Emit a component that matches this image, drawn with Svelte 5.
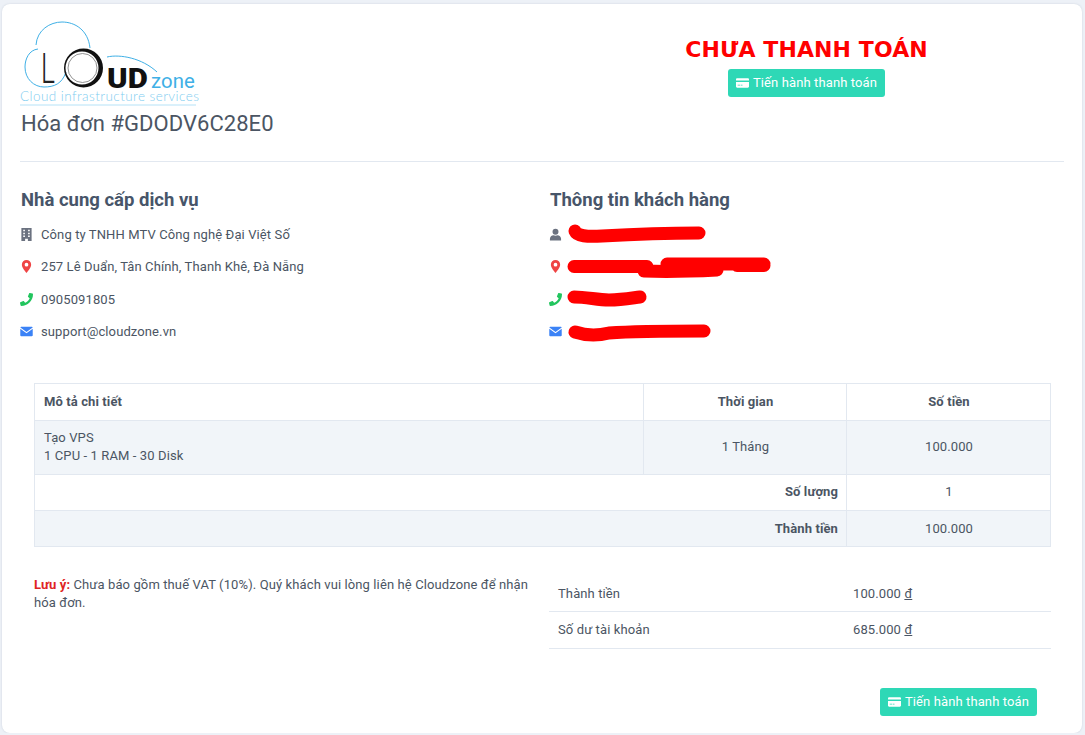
<script lang="ts">
  const provider = [
    { icon: 'building', text: 'Công ty TNHH MTV Công nghệ Đại Việt Số' },
    { icon: 'pin', text: '257 Lê Duẩn, Tân Chính, Thanh Khê, Đà Nẵng' },
    { icon: 'phone', text: '0905091805' },
    { icon: 'mail', text: 'support@cloudzone.vn' },
  ];

  // hidden customer details, scribbled over in the original
  const customer = [
    { icon: 'user', w: 142, h: 20, d: 'M8 7C10 12 20 13 35 12C70 10 105 9 132 9' },
    { icon: 'pin', w: 208, h: 24, d: 'M7 11.500H80M77 16C100 17 130 16 150 15M100 9H197M170 10.500H197' },
    { icon: 'phone', w: 84, h: 18, d: 'M7 7C20 7 30 10 42 10C55 10 65 8 73 7' },
    { icon: 'mail', w: 148, h: 20, d: 'M8 10C20 14 30 14 42 11C70 9 110 9 137 9' },
  ];
</script>

{#snippet icon(name)}
  {#if name === 'building'}
    <svg class="ic" viewBox="0 0 14 14"><path fill="#6b7280" fill-rule="evenodd" d="M1.500 0h11v14H8.500v-2.500h-3V14h-4zM3.500 2v1.600h1.800V2zM8.700 2v1.600h1.800V2zM3.500 5v1.600h1.800V5zM8.700 5v1.600h1.800V5zM3.500 8v1.600h1.800V8zM8.700 8v1.600h1.800V8z" /></svg>
  {:else if name === 'pin'}
    <svg class="ic" viewBox="0 0 14 14"><path fill="#ef4444" fill-rule="evenodd" d="M7 0a5 5 0 0 1 5 5c0 3-3.400 6.700-5 9C5.400 11.700 2 8 2 5a5 5 0 0 1 5-5zm0 3a2 2 0 1 0 0 4 2 2 0 0 0 0-4z" /></svg>
  {:else if name === 'phone'}
    <svg class="ic" viewBox="0 0 512 512"><path fill="#22c55e" d="M493.400 24.600l-104-24c-11.300-2.600-22.900 3.300-27.500 13.900l-48 112c-4.200 9.800-1.400 21.300 6.900 28l60.600 49.600c-36 76.700-98.900 140.500-177.200 177.200l-49.600-60.600c-6.800-8.300-18.200-11.100-28-6.900l-112 48C3.900 366.500-2 378.100.6 389.400l24 104C27.100 504.200 36.700 512 48 512c256.100 0 464-207.500 464-464 0-11.200-7.700-20.900-18.600-23.400z" /></svg>
  {:else if name === 'mail'}
    <svg class="ic" viewBox="0 0 14 14"><path fill="#3b82f6" d="M1.300 2h11.400c.5 0 .9.300 1 .7L7 7.500.4 2.700c.1-.4.400-.7.900-.7zM.3 4.100 7 9l6.700-4.900V11c0 .6-.5 1-1 1H1.300c-.6 0-1-.4-1-1z" /></svg>
  {:else}
    <svg class="ic" viewBox="0 0 14 14"><path fill="#6b7280" d="M7 .8a3.200 3.200 0 1 1 0 6.400A3.200 3.200 0 0 1 7 .8zM1 13.500v-1.800C1 9.600 2.800 7.900 4.800 7.900c.7.300 1.400.5 2.200.5s1.500-.2 2.200-.5c2 0 3.800 1.700 3.800 3.800v1.800z" /></svg>
  {/if}
{/snippet}

{#snippet payButton()}
  <button class="pay">
    <svg class="card-ic" viewBox="0 0 14 12"><path fill="#fff" fill-rule="evenodd" d="M1.200 1h11.600c.6 0 1.200.5 1.200 1.100V3.300H0V2.100C0 1.500.6 1 1.200 1zM0 5h14v4.900c0 .6-.6 1.100-1.200 1.100H1.200C.6 11 0 10.500 0 9.900zM1.800 7.800v1h2.500v-1zM5 7.800v1h2v-1z" /></svg>
    <span>Tiến hành thanh toán</span>
  </button>
{/snippet}

<main class="invoice">
  <header class="top">
    <div class="brand">
      <svg class="logo" viewBox="0 0 180 84" width="180" height="84">
        <g fill="none" stroke="#3fb0e6" stroke-width="1">
          <path d="M16 23C17 8 30 0 42 0C55 0 68 8 70 26" />
          <path d="M18 27C9 28 5 37 5 45C5 57 14 65 24 65C34 65 42 62 46 50" />
          <path d="M87 35C100 32 122 36 137 50" />
        </g>
        <path fill="#111" fill-rule="evenodd" d="M63.500 26.500a19.500 19.500 0 1 1 0 39a19.500 19.500 0 1 1 0-39zM62 29.500a16.500 16.500 0 1 0 0 33a16.500 16.500 0 1 0 0-33z" />
        <circle cx="62.500" cy="46" r="14.500" fill="none" stroke="#777" stroke-width="0.8" />
        <text x="21" y="61" class="logo-l" textLength="14" lengthAdjust="spacingAndGlyphs">L</text>
        <text x="87" y="66" class="logo-ud" textLength="41" lengthAdjust="spacingAndGlyphs">UD</text>
        <text x="131" y="66" class="logo-zone" textLength="44" lengthAdjust="spacingAndGlyphs">zone</text>
        <text x="0" y="79" class="logo-sub" textLength="179" lengthAdjust="spacing">Cloud infrastructure services</text>
        <path d="M0 83H176" stroke="#b5e2f7" stroke-width="1" />
      </svg>
      <h1>Hóa đơn #GDODV6C28E0</h1>
    </div>
    <div class="status">
      <strong>CHƯA THANH TOÁN</strong>
      {@render payButton()}
    </div>
  </header>

  <section class="parties">
    <div>
      <h2>Nhà cung cấp dịch vụ</h2>
      <ul>
        {#each provider as row}
          <li>{@render icon(row.icon)}<span>{row.text}</span></li>
        {/each}
      </ul>
    </div>
    <div>
      <h2>Thông tin khách hàng</h2>
      <ul>
        {#each customer as row}
          <li>
            {@render icon(row.icon)}
            <svg class="scribble" width={row.w} height={row.h} viewBox="0 0 {row.w} {row.h}">
              <path d={row.d} fill="none" stroke="#ff0000" stroke-width="13" stroke-linecap="round" stroke-linejoin="round" />
            </svg>
          </li>
        {/each}
      </ul>
    </div>
  </section>

  <table class="items">
    <colgroup><col class="c1" /><col class="c2" /><col class="c3" /></colgroup>
    <thead>
      <tr class="taller"><th class="left">Mô tả chi tiết</th><th>Thời gian</th><th>Số tiền</th></tr>
    </thead>
    <tbody>
      <tr class="shade tall">
        <td class="left">Tạo VPS<br />1 CPU - 1 RAM - 30 Disk</td>
        <td>1 Tháng</td>
        <td>100.000</td>
      </tr>
      <tr class="lift"><th colspan="2" class="right">Số lượng</th><td>1</td></tr>
      <tr class="shade"><th colspan="2" class="right">Thành tiền</th><td>100.000</td></tr>
    </tbody>
  </table>

  <section class="summary">
    <p class="note"><b>Lưu ý:</b> Chưa báo gồm thuế VAT (10%). Quý khách vui lòng liên hệ Cloudzone để nhận hóa đơn.</p>
    <div class="totals">
      <div class="line"><span>Thành tiền</span><span>100.000 <u>đ</u></span></div>
      <div class="line"><span>Số dư tài khoản</span><span>685.000 <u>đ</u></span></div>
    </div>
  </section>

  <div class="actions">{@render payButton()}</div>
</main>

<style>
  :global(body) {
    background: #edf1f7;
    font-family: Roboto, sans-serif;
  }

  .invoice {
    box-sizing: border-box;
    width: 1080px;
    height: 729px;
    margin: 4px 0 0 2px;
    padding: 18px 18px 0;
    background: #fff;
    border-radius: 8px;
    box-shadow: 0 0 2px rgba(100, 116, 139, 0.25);
    color: #4b5563;
    font-size: 13px;
    letter-spacing: 0.11px;
  }

  .top {
    display: grid;
    grid-template-columns: 529px 515px;
    height: 139px;
    border-bottom: 1px solid #e2e8f0;
  }

  .logo {
    display: block;
    overflow: visible;
  }

  .logo-l {
    font: 300 42px Roboto, sans-serif;
    fill: #222;
  }

  .logo-ud {
    font: 900 28px Roboto, sans-serif;
    fill: #111;
  }

  .logo-zone {
    font: 400 21px Roboto, sans-serif;
    fill: #3fb0e6;
  }

  .logo-sub {
    font: 300 13.500px Lato, sans-serif;
    fill: #7fcdf0;
  }

  h1 {
    margin: 3px 0 0 1px;
    font-size: 22px;
    font-weight: 400;
    line-height: 30px;
    letter-spacing: 0.05px;
    color: #4b5563;
  }

  .status {
    display: flex;
    flex-direction: column;
    align-items: center;
    padding-top: 13px;
  }

  .status strong {
    font: 700 22px/30px "DejaVu Sans", sans-serif;
    letter-spacing: 0.1px;
    color: #ff0000;
    margin-bottom: 4px;
  }

  .pay {
    display: inline-flex;
    align-items: center;
    gap: 4px;
    height: 28px;
    padding: 0 8px;
    border: 0;
    border-radius: 3px;
    background: #2ed8b6;
    color: #fff;
    font: 400 13px Roboto, sans-serif;
    letter-spacing: 0.11px;
  }

  .pay span {
    margin-bottom: 2px;
  }

  .card-ic {
    width: 13px;
    height: 12px;
  }

  .parties {
    display: grid;
    grid-template-columns: 529px 515px;
    padding-top: 27px;
    height: 194px;
  }

  h2 {
    margin: 0 0 0 1px;
    font-size: 18.500px;
    font-weight: 700;
    line-height: 22px;
    letter-spacing: 0;
    color: #475569;
  }

  ul {
    list-style: none;
    margin: 7px 0 0;
    padding: 0;
  }

  li {
    display: flex;
    align-items: center;
    gap: 8px;
    height: 32.500px;
  }

  .ic {
    width: 13px;
    height: 13px;
    flex: none;
  }

  .scribble {
    flex: none;
    margin-left: -3px;
    overflow: visible;
  }

  .items {
    width: 1016px;
    margin-left: 14px;
    border-collapse: collapse;
    table-layout: fixed;
  }

  .c1 {
    width: 609px;
  }

  .c2 {
    width: 203px;
  }

  .c3 {
    width: 204px;
  }

  th,
  td {
    height: 36px;
    padding: 0 8px 0 9px;
    border: 1px solid #e2e8f0;
    text-align: center;
    font-weight: 400;
    line-height: 18px;
    box-sizing: border-box;
  }

  th {
    font-weight: 700;
    font-size: 13px;
  }

  .left {
    text-align: left;
  }

  .right {
    text-align: right;
  }

  .shade {
    background: #f1f5f9;
  }

  .tall td {
    height: 54px;
    padding-bottom: 2px;
  }

  .lift td,
  .lift th {
    padding-bottom: 2px;
  }

  .taller th,
  .taller td {
    height: 37px;
  }

  .summary {
    display: grid;
    grid-template-columns: 515px 502px;
    margin: 27px 0 0 14px;
  }

  .note {
    margin: 2px 15px 0 0;
    line-height: 18px;
  }

  .note b {
    color: #e02424;
  }

  .line {
    box-sizing: border-box;
    display: grid;
    grid-template-columns: 295px 1fr;
    align-items: center;
    height: 37.500px;
    padding-left: 9px;
    border-bottom: 1px solid #e2e8f0;
  }

  .line:first-child {
    padding-top: 2px;
  }

  .actions {
    display: flex;
    justify-content: flex-end;
    margin: 39px 27px 0 0;
  }
</style>
